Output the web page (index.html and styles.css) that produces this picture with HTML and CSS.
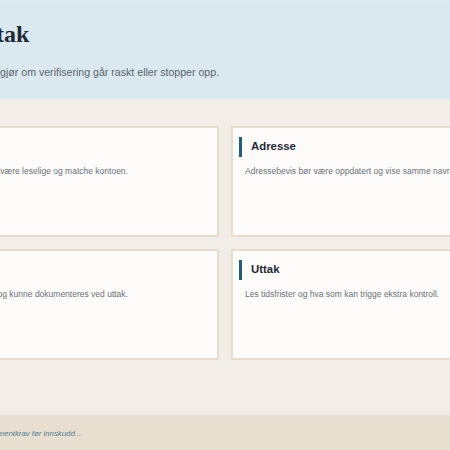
FILE: index.html
```html
<!DOCTYPE html>
<html lang="no">
<head>
    <meta charset="UTF-8">
    <meta name="viewport" content="width=device-width, initial-scale=1.0">
    <title>Om uttak</title>
    <link rel="stylesheet" href="styles.css">
</head>
<body>
    <header class="hero">
        <div class="hero-inner">
            <h1>Om uttak</h1>
            <p>Se hva som avgjør om verifisering går raskt eller stopper opp.</p>
        </div>
    </header>

    <main class="docs">
        <div class="card-grid">
            <article class="card">
                <h3>Identitet</h3>
                <p>ID-dokumentene må være leselige og matche kontoen.</p>
            </article>
            <article class="card">
                <h3>Adresse</h3>
                <p>Adressebevis bør være oppdatert og vise samme navn som kontoen.</p>
            </article>
            <article class="card">
                <h3>Betaling</h3>
                <p>Må stå på ditt navn, og kunne dokumenteres ved uttak.</p>
            </article>
            <article class="card">
                <h3>Uttak</h3>
                <p>Les tidsfrister og hva som kan trigge ekstra kontroll.</p>
            </article>
        </div>
    </main>

    <footer class="site-foot">
        <p>Se dokumentkrav før innskudd...</p>
    </footer>
</body>
</html>
```

FILE: styles.css
```css
html, body {
    overflow: hidden;
}

body {
    margin: 0;
    padding: 0;
    background-color: #f2ede6;
    font-family: "Liberation Sans", Arial, sans-serif;
    color: #1f2a36;
}

/* top band with page title */
.hero {
    background-color: #dae9f0;
    border-top: 2px solid #e1e8eb;
    height: 97px;
}

.hero-inner {
    margin-left: -70px;
    padding-top: 17px;
}

.hero h1 {
    font-family: "Liberation Serif", "DejaVu Serif", serif;
    font-size: 24px;
    font-weight: bold;
    line-height: 30px;
    margin: 0;
}

.hero p {
    font-size: 10.6px;
    color: #5b636b;
    margin: 17px 0 0;
    white-space: nowrap;
}

/* document cards */
.docs {
    padding: 27px 0 55px;
}

.card-grid {
    display: grid;
    grid-template-columns: 312px 312px;
    gap: 12px;
    margin-left: -93px;
}

.card {
    background-color: #fdfcfa;
    border: 2px solid #e6ddcd;
    padding: 9px 12px 0;
    height: 98px;
}

.card h3 {
    font-size: 11.4px;
    font-weight: bold;
    line-height: 16px;
    margin: 0 0 0 -6px;
    padding: 1px 0 3px 9px;
    border-left: 3px solid #1d5f7e;
}

.card p {
    font-size: 8.5px;
    color: #6b7178;
    margin: 9px 0 0;
    white-space: nowrap;
}

.site-foot {
    background-color: #e8dfd0;
    height: 60px;
}

.site-foot p {
    margin: 0 0 0 -31px;
    padding-top: 14px;
    font-size: 7.8px;
    font-style: italic;
    color: #4f7f94;
}
```
